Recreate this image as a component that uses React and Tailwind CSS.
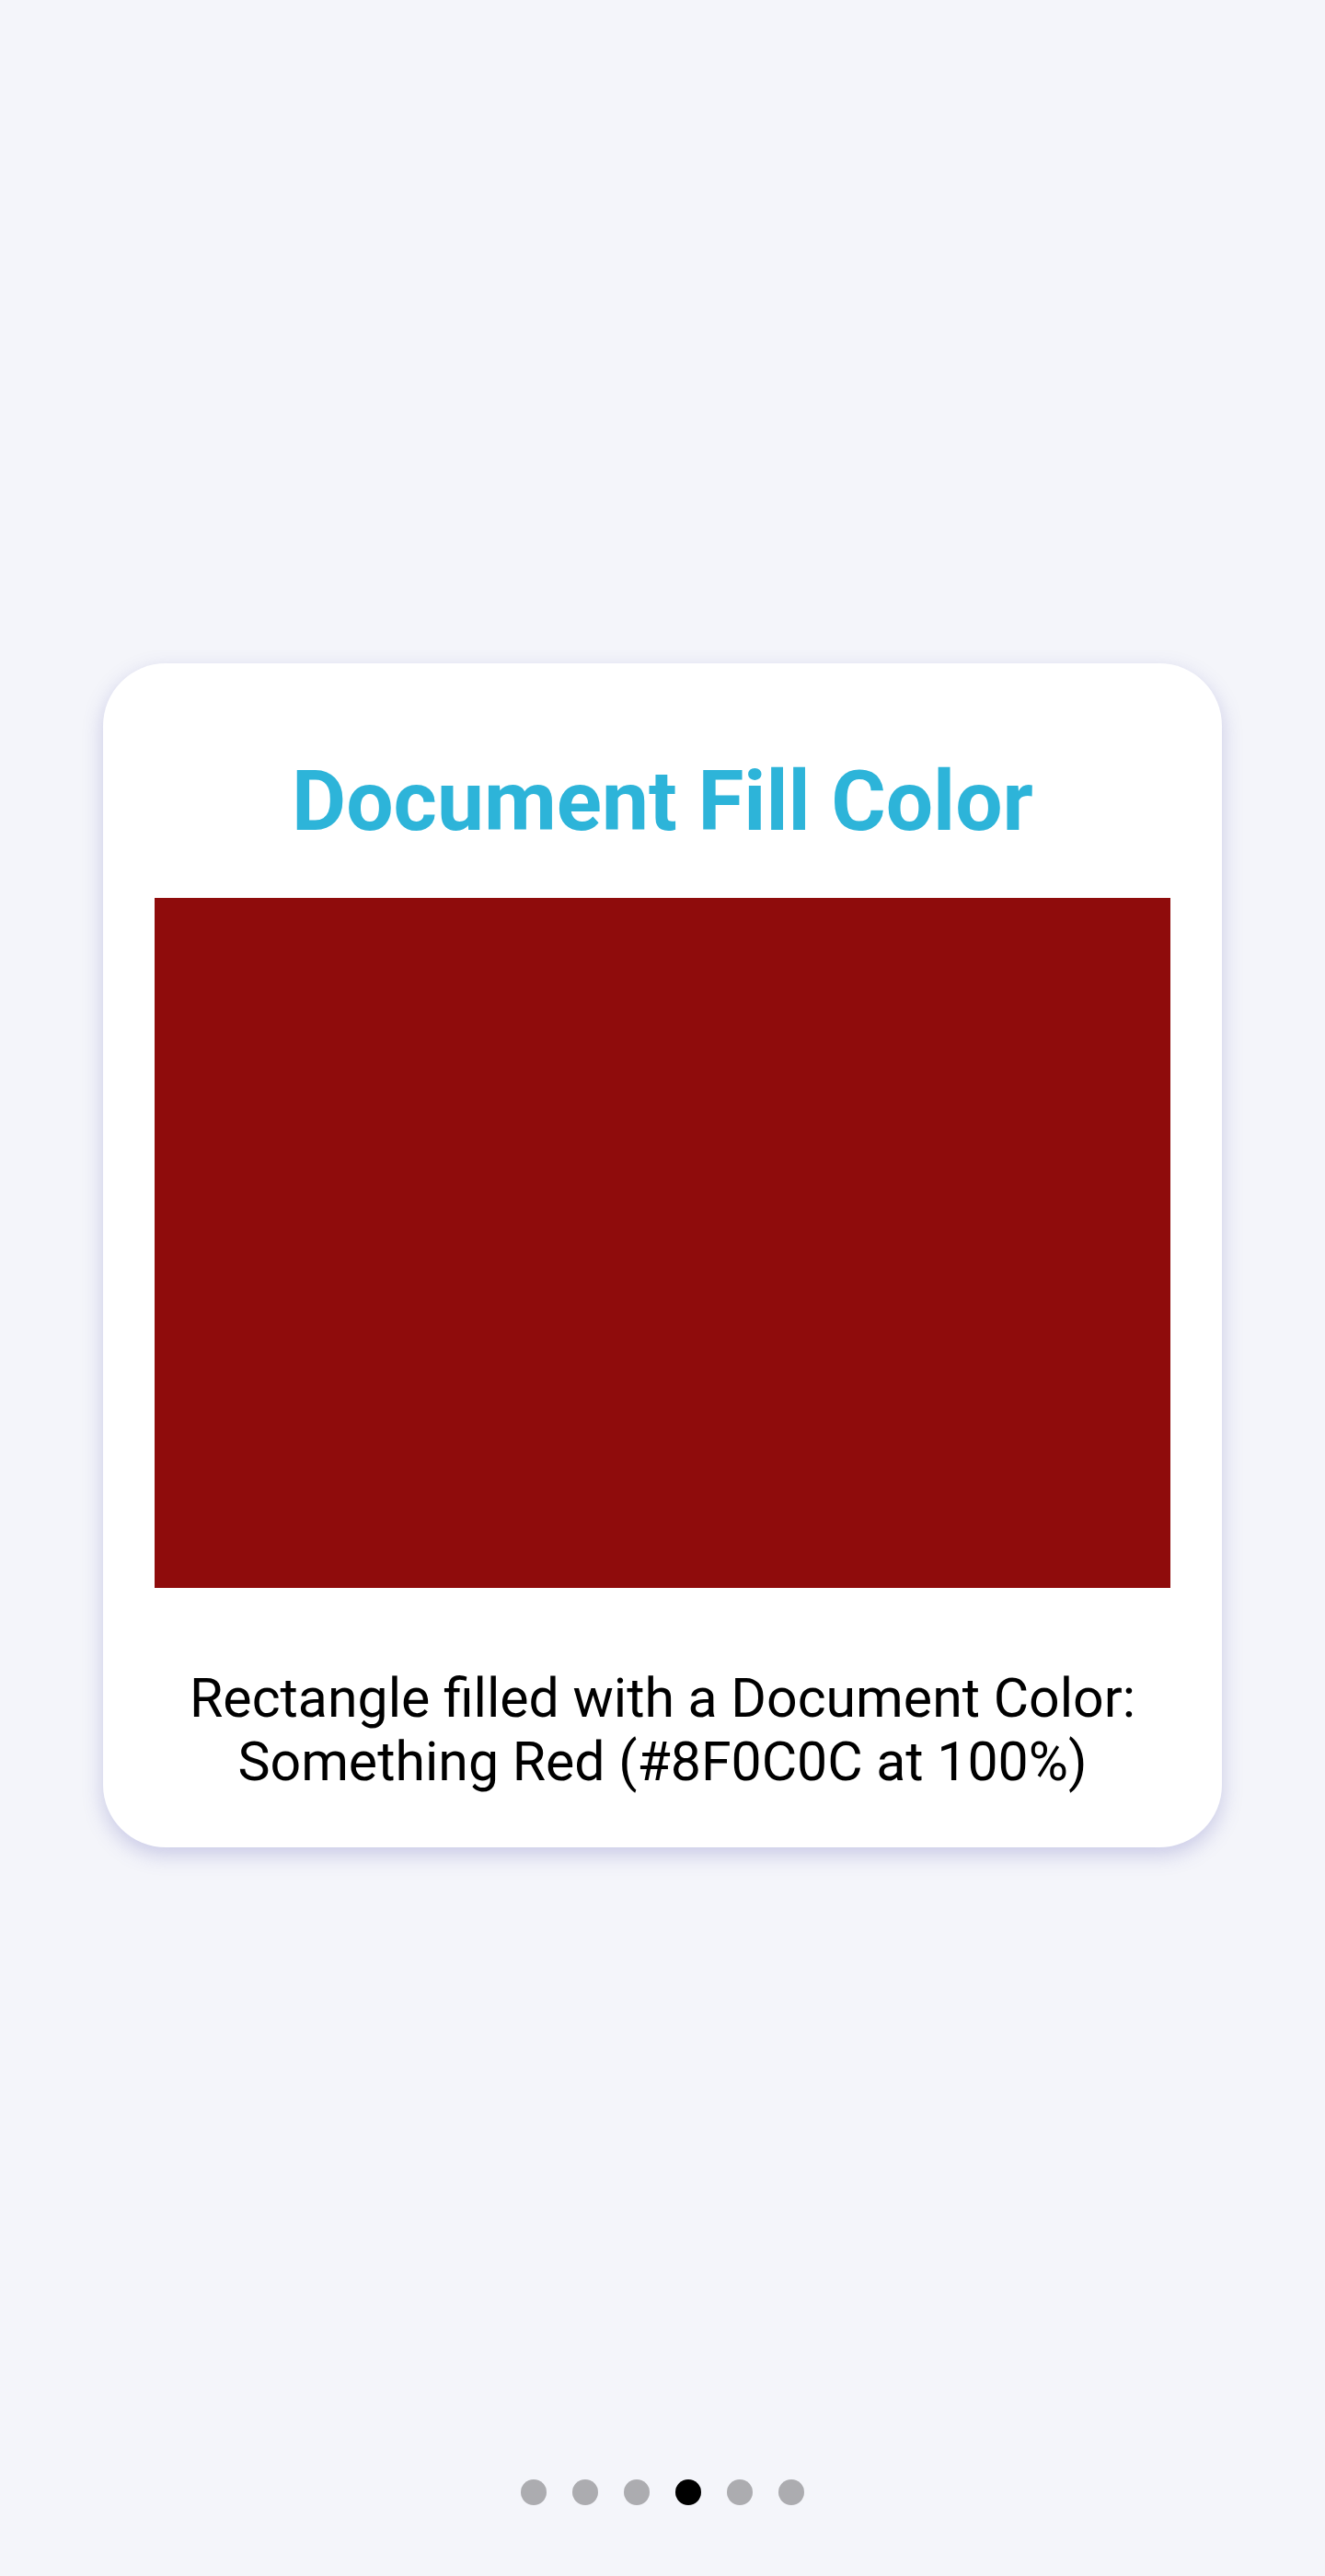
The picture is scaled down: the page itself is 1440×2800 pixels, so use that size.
import React from "react";

export default function App() {
  const dots = [0, 1, 2, 3, 4, 5];
  const active = 3;
  return (
    <div
      className="w-[1440px] h-[2800px] bg-[#f4f5fa] flex flex-col items-center"
      style={{ fontFamily: "Roboto, 'Noto Sans', sans-serif" }}
    >
      <div className="mt-[721px] w-[1216px] h-[1287px] bg-white rounded-[68px] shadow-[0_8px_22px_rgba(90,90,180,0.28)] flex flex-col items-center pt-[105px] px-[56px]">
        <h1 className="text-[91px] leading-[91px] font-bold text-[#2db4d9] text-center">
          Document Fill Color
        </h1>
        <div className="mt-[59px] w-[1104px] h-[750px] bg-[#8f0c0c]" />
        <p className="mt-[85px] text-[59px] leading-[69px] text-black text-center">
          Rectangle filled with a Document Color:
          <br />
          Something Red (#8F0C0C at 100%)
        </p>
      </div>
      <div className="mt-auto mb-[77px] flex gap-[28px]">
        {dots.map((d) => (
          <div
            key={d}
            className={
              d === active
                ? "w-[28px] h-[28px] rounded-full bg-black"
                : "w-[28px] h-[28px] rounded-full bg-[#acacb0]"
            }
          />
        ))}
      </div>
    </div>
  );
}
